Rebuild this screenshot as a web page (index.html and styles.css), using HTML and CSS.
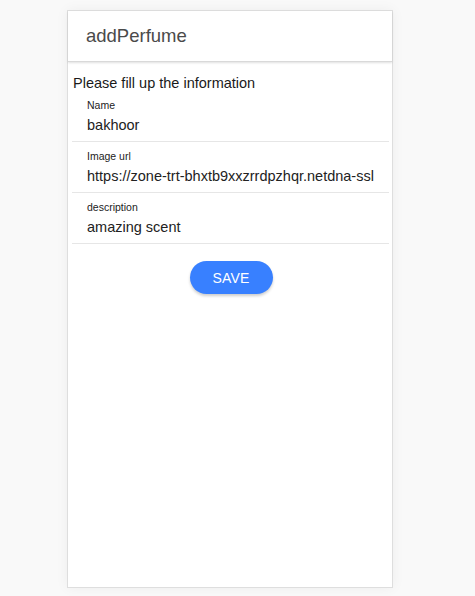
FILE: index.html
```html
<!DOCTYPE html>
<html>
<head>
<meta charset="utf-8">
<link rel="stylesheet" href="styles.css">
</head>
<body>
<div class="page">
  <div class="card">
    <header class="toolbar">
      <h1 class="title">addPerfume</h1>
    </header>
    <main class="content">
      <p class="intro">Please fill up the information</p>
      <div class="field">
        <div class="label">Name</div>
        <div class="value">bakhoor</div>
      </div>
      <div class="field">
        <div class="label">Image url</div>
        <div class="value">https://zone-trt-bhxtb9xxzrrdpzhqr.netdna-ssl</div>
      </div>
      <div class="field">
        <div class="label">description</div>
        <div class="value">amazing scent</div>
      </div>
      <div class="actions">
        <button class="save">SAVE</button>
      </div>
    </main>
  </div>
</div>
</body>
</html>
```

FILE: styles.css
```css
html, body {
  margin: 0;
  padding: 0;
  background: #f9f9f9;
  font-family: "Liberation Sans", Arial, sans-serif;
}
.page {
  display: flex;
  padding: 10px 0 0 67px;
  height: 596px;
  box-sizing: border-box;
}
.card {
  width: 326px;
  height: 578px;
  box-sizing: border-box;
  background: #fff;
  border: 1px solid #dedede;
  box-shadow: 0 0 12px rgba(0,0,0,0.05);
  display: flex;
  flex-direction: column;
}
.toolbar {
  height: 51px;
  border-bottom: 1px solid #d9d9d9;
  box-shadow: 0 1px 2px rgba(0,0,0,0.12);
  display: flex;
  align-items: center;
  padding-left: 18px;
  box-sizing: border-box;
}
.title {
  margin: 0;
  font-size: 18.5px;
  font-weight: 400;
  color: #4a4a4a;
}
.content {
  padding: 12px 3px 0 4px;
}
.intro {
  margin: 0 0 0 1px;
  font-size: 14.5px;
  color: #1a1a1a;
  line-height: 18px;
}
.field {
  margin-top: 7px;
  padding: 0 3px 7px 15px;
  border-bottom: 1px solid #e6e6e6;
  overflow: hidden;
}
.field + .field {
  margin-top: 8px;
}
.label {
  font-size: 10.5px;
  color: #222;
  line-height: 13px;
}
.value {
  margin-top: 4px;
  font-size: 14.5px;
  color: #222;
  line-height: 18px;
  white-space: nowrap;
  overflow: hidden;
}
.actions {
  display: flex;
  justify-content: center;
  margin-top: 17px;
}
.save {
  width: 83px;
  height: 33px;
  border: none;
  border-radius: 17px;
  background: #3880ff;
  color: #fff;
  font-family: "Liberation Sans", Arial, sans-serif;
  font-size: 14px;
  font-weight: 500;
  letter-spacing: 0.2px;
  box-shadow: 0 2px 3px rgba(0,0,0,0.2);
  margin-left: 1px;
}
```
